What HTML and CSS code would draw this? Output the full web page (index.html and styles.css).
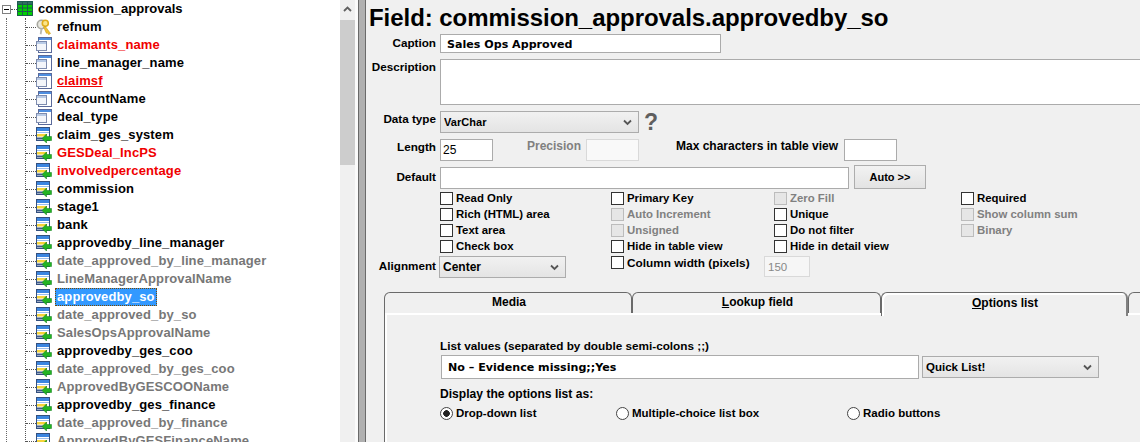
FILE: index.html
```html
<!DOCTYPE html>
<html lang="en">
<head>
<meta charset="utf-8">
<title>Field: commission_approvals.approvedby_so</title>
<link rel="stylesheet" href="styles.css">
</head>
<body>
<svg class="defs" width="0" height="0" aria-hidden="true">
  <symbol id="i-table" viewBox="0 0 16 16">
    <rect x="0" y="0" width="16" height="15" fill="#00d000"/>
    <rect x="0" y="0" width="16" height="3" fill="#2f6f5f"/>
    <path d="M.5 .5H15.5V14.5H.5ZM.5 3.5H15.5M.5 7H15.5M.5 10.5H15.5M5.5 .5V14.5M10.5 .5V14.5" fill="none" stroke="#1f5a50" stroke-width="1"/>
  </symbol>
  <symbol id="i-key" viewBox="0 0 16 16">
    <circle cx="5.5" cy="5.5" r="4.2" fill="#e8e8e0" stroke="#a8a8a0" stroke-width="1.6"/>
    <path d="M4.5 9.5L3.8 15L5.5 15.5L6.6 9.5Z" fill="#b9b9b0"/>
    <circle cx="9.3" cy="4.2" r="3" fill="#fbe58a" stroke="#e0ac1c" stroke-width="1.6"/>
    <path d="M9 7L14.5 14.5L12.6 15.6L11.4 13.8L10.4 14.3L7.6 8Z" fill="#f2c230" stroke="#c89a18" stroke-width=".6"/>
  </symbol>
  <symbol id="i-field" viewBox="0 0 16 16">
    <rect x="2.5" y=".5" width="13" height="15" fill="#fff" stroke="#5a6a9a"/>
    <rect x="3" y="1" width="12" height="2" fill="#4f8fe0"/>
    <rect x=".5" y="4.5" width="10" height="9" fill="#f4f6fa" stroke="#7e8cae"/>
    <rect x="1" y="5" width="9" height="2" fill="#b9cbe6"/>
  </symbol>
  <symbol id="i-lookup" viewBox="0 0 16 16">
    <rect x=".5" y=".5" width="13" height="13" fill="#fff" stroke="#33507f"/>
    <rect x="1" y="1" width="12" height="3" fill="#3b86e0"/>
    <rect x="1" y="5" width="12" height="1" fill="#9cc0ea"/>
    <rect x="1" y="7" width="10" height="2.5" fill="#f6d43a"/>
    <rect x="1" y="10.5" width="7" height="2" fill="#3f5a8a"/>
    <path d="M6 11.5L10.5 7V9.5H15.5V13.5H10.5V16Z" fill="#22b422" stroke="#0f7a18" stroke-width=".5"/>
  </symbol>
  <symbol id="i-chev" viewBox="0 0 9 7">
    <path d="M1 1.5L4.5 5L8 1.5" fill="none" stroke="#555" stroke-width="1.8"/>
  </symbol>
</svg>

<div class="app">
  <nav class="tree">
    <div class="node root">
      <span class="expander"></span>
      <span class="conn conn-root"></span>
      <svg class="icon"><use href="#i-table"/></svg>
      <span class="name">commission_approvals</span>
    </div>
    <div class="trunk">
      <ul class="children">
        <li class="node"><span class="conn"></span><svg class="icon"><use href="#i-key"/></svg><span class="name">refnum</span></li>
        <li class="node"><span class="conn"></span><svg class="icon"><use href="#i-field"/></svg><span class="name red">claimants_name</span></li>
        <li class="node"><span class="conn"></span><svg class="icon"><use href="#i-field"/></svg><span class="name">line_manager_name</span></li>
        <li class="node"><span class="conn"></span><svg class="icon"><use href="#i-field"/></svg><span class="name red under">claimsf</span></li>
        <li class="node"><span class="conn"></span><svg class="icon"><use href="#i-field"/></svg><span class="name">AccountName</span></li>
        <li class="node"><span class="conn"></span><svg class="icon"><use href="#i-field"/></svg><span class="name">deal_type</span></li>
        <li class="node"><span class="conn"></span><svg class="icon"><use href="#i-lookup"/></svg><span class="name">claim_ges_system</span></li>
        <li class="node"><span class="conn"></span><svg class="icon"><use href="#i-lookup"/></svg><span class="name red">GESDeal_IncPS</span></li>
        <li class="node"><span class="conn"></span><svg class="icon"><use href="#i-lookup"/></svg><span class="name red">involvedpercentage</span></li>
        <li class="node"><span class="conn"></span><svg class="icon"><use href="#i-lookup"/></svg><span class="name">commission</span></li>
        <li class="node"><span class="conn"></span><svg class="icon"><use href="#i-lookup"/></svg><span class="name">stage1</span></li>
        <li class="node"><span class="conn"></span><svg class="icon"><use href="#i-lookup"/></svg><span class="name">bank</span></li>
        <li class="node"><span class="conn"></span><svg class="icon"><use href="#i-lookup"/></svg><span class="name">approvedby_line_manager</span></li>
        <li class="node"><span class="conn"></span><svg class="icon"><use href="#i-lookup"/></svg><span class="name grey">date_approved_by_line_manager</span></li>
        <li class="node"><span class="conn"></span><svg class="icon"><use href="#i-lookup"/></svg><span class="name grey">LineManagerApprovalName</span></li>
        <li class="node"><span class="conn"></span><svg class="icon"><use href="#i-lookup"/></svg><span class="name selected">approvedby_so</span></li>
        <li class="node"><span class="conn"></span><svg class="icon"><use href="#i-lookup"/></svg><span class="name grey">date_approved_by_so</span></li>
        <li class="node"><span class="conn"></span><svg class="icon"><use href="#i-lookup"/></svg><span class="name grey">SalesOpsApprovalName</span></li>
        <li class="node"><span class="conn"></span><svg class="icon"><use href="#i-lookup"/></svg><span class="name">approvedby_ges_coo</span></li>
        <li class="node"><span class="conn"></span><svg class="icon"><use href="#i-lookup"/></svg><span class="name grey">date_approved_by_ges_coo</span></li>
        <li class="node"><span class="conn"></span><svg class="icon"><use href="#i-lookup"/></svg><span class="name grey">ApprovedByGESCOOName</span></li>
        <li class="node"><span class="conn"></span><svg class="icon"><use href="#i-lookup"/></svg><span class="name">approvedby_ges_finance</span></li>
        <li class="node"><span class="conn"></span><svg class="icon"><use href="#i-lookup"/></svg><span class="name grey">date_approved_by_finance</span></li>
        <li class="node"><span class="conn"></span><svg class="icon"><use href="#i-lookup"/></svg><span class="name grey">ApprovedByGESFinanceName</span></li>
      </ul>
    </div>
  </nav>

  <div class="scrollbar">
    <div class="sb-up"><svg class="sb-chev" viewBox="0 0 9 6"><path d="M1 5L4.5 1.5L8 5" fill="none" stroke="#606060" stroke-width="1.8"/></svg></div>
    <div class="sb-thumb"></div>
  </div>
  <div class="gutter"></div>
  <div class="splitter"></div>

  <main class="main">
    <h1 class="title">Field: commission_approvals.approvedby_so</h1>

    <div class="row row-first">
      <label class="lbl lbl-caption">Caption</label>
      <input class="input input-caption val" type="text" value="Sales Ops Approved">
    </div>
    <div class="row">
      <label class="lbl">Description</label>
      <textarea class="input input-desc"></textarea>
    </div>
    <div class="row">
      <label class="lbl">Data type</label>
      <div class="select select-type"><select><option>VarChar</option></select><svg class="chev"><use href="#i-chev"/></svg></div>
      <span class="help">?</span>
    </div>
    <div class="row">
      <label class="lbl">Length</label>
      <input class="input input-num" type="text" value="25">
      <label class="inline-lbl raised muted lbl-precision">Precision</label>
      <input class="input input-num" type="text" disabled>
      <label class="inline-lbl raised lbl-max">Max characters in table view</label>
      <input class="input input-num" type="text">
    </div>
    <div class="row">
      <label class="lbl lbl-low">Default</label>
      <input class="input input-default" type="text">
      <button class="btn-auto" type="button">Auto &gt;&gt;</button>
    </div>

    <div class="checks">
      <label class="check"><input type="checkbox"><span>Read Only</span></label>
      <label class="check"><input type="checkbox"><span>Primary Key</span></label>
      <label class="check off"><input type="checkbox" disabled><span>Zero Fill</span></label>
      <label class="check"><input type="checkbox"><span>Required</span></label>

      <label class="check"><input type="checkbox"><span>Rich (HTML) area</span></label>
      <label class="check off"><input type="checkbox" disabled><span>Auto Increment</span></label>
      <label class="check"><input type="checkbox"><span>Unique</span></label>
      <label class="check off"><input type="checkbox" disabled><span>Show column sum</span></label>

      <label class="check"><input type="checkbox"><span>Text area</span></label>
      <label class="check off"><input type="checkbox" disabled><span>Unsigned</span></label>
      <label class="check"><input type="checkbox"><span>Do not filter</span></label>
      <label class="check off"><input type="checkbox" disabled><span>Binary</span></label>

      <label class="check"><input type="checkbox"><span>Check box</span></label>
      <label class="check"><input type="checkbox"><span>Hide in table view</span></label>
      <label class="check"><input type="checkbox"><span>Hide in detail view</span></label>
    </div>

    <div class="row row-align">
      <label class="lbl lbl-low">Alignment</label>
      <div class="select select-align"><select><option>Center</option></select><svg class="chev"><use href="#i-chev"/></svg></div>
      <label class="check check-width"><input type="checkbox"><span>Column width (pixels)</span></label>
      <input class="input input-width" type="text" value="150" disabled>
    </div>

    <div class="tabs">
      <div class="tab">Media</div>
      <div class="tab tab-wide"><u>L</u>ookup field</div>
      <div class="tab active"><u>O</u>ptions list</div>
      <div class="tab"></div>
    </div>
    <section class="panel">
      <div class="panel-label panel-label-list">List values (separated by double semi-colons ;;)</div>
      <div class="list-row">
        <input class="input input-list val" type="text" value="No – Evidence missing;;Yes">
        <div class="select select-quick"><select><option>Quick List!</option></select><svg class="chev"><use href="#i-chev"/></svg></div>
      </div>
      <div class="panel-label panel-label-display">Display the options list as:</div>
      <div class="radios">
        <label class="radio radio-a"><input type="radio" name="display" checked><span>Drop-down list</span></label>
        <label class="radio radio-b"><input type="radio" name="display"><span>Multiple-choice list box</span></label>
        <label class="radio"><input type="radio" name="display"><span>Radio buttons</span></label>
      </div>
    </section>
  </main>
</div>
</body>
</html>
```
FILE: styles.css
```css
* { box-sizing: border-box; }
html, body { margin: 0; padding: 0; height: 100%; overflow: hidden; }
body { font: bold 12px "Liberation Sans", Arial, sans-serif; color: #000; background: #f0f0f0; }
.defs { display: block; height: 0; }
.app { display: flex; width: 1140px; height: 442px; overflow: hidden; }

/* tree */
.tree { width: 340px; height: 442px; flex: none; background: #fff; overflow: hidden; font-size: 13px; }
.node { display: flex; align-items: center; height: 18px; white-space: nowrap; }
.root { padding-left: 2px; }
.expander { width: 9px; height: 9px; flex: none; border: 1px solid #808080; background: linear-gradient(#000, #000) center / 5px 1px no-repeat #fff; }
.conn { flex: none; width: 10px; height: 0; border-top: 1px dotted #555; }
.conn-root { width: 6px; }
.icon { flex: none; width: 16px; height: 16px; }
.name { margin-left: 3px; padding: 0 2px; line-height: 18px; height: 18px; }
.children .name { letter-spacing: .12px; }
.red { color: #f00000; }
.under { text-decoration: underline; }
.grey { color: #777; }
.selected { background: #3399ff; color: #fff; outline: 1px dotted #7a4a00; outline-offset: -1px; }
.trunk { margin-left: 6px; border-left: 1px dotted #666; height: 430px; }
.children { list-style: none; margin: 0 0 0 18px; padding: 0; border-left: 1px dotted #555; }

/* scrollbar and splitter */
.scrollbar { width: 15px; flex: none; background: #f0f0f0; display: flex; flex-direction: column; }
.sb-up { height: 20px; display: flex; align-items: center; justify-content: center; }
.sb-chev { width: 9px; height: 6px; margin-top: -3px; }
.sb-thumb { height: 145px; background: #cdcdcd; }
.gutter { width: 3px; flex: none; background: #fbfbfb; }
.splitter { width: 8px; flex: none; background: #b0b0b0; border-left: 1px solid #6a6a6a; border-right: 1px solid #6a6a6a; }

/* main form */
.main { width: 774px; flex: none; height: 442px; overflow: hidden; background: #f0f0f0; }
.title { margin: 0; height: 34px; padding-left: 3px; font-size: 24px; line-height: 36px; font-weight: bold; white-space: nowrap; letter-spacing: -.05px; }
.row { display: flex; align-items: flex-start; margin-top: 6px; white-space: nowrap; }
.row-first { margin-top: 0; }
.lbl { flex: none; width: 70px; margin-right: 4px; text-align: right; line-height: 15px; font-size: 11.7px; }
.lbl-low { padding-top: 2px; }
.lbl-caption { padding-top: 1px; }
.raised { margin-top: -1px; }
.input { display: block; flex: none; margin: 0; padding: 0 2px; background: #fff; border: 1px solid #ababab; border-radius: 0; outline: none; font: 12px "Liberation Sans", Arial, sans-serif; color: #000; resize: none; }
.input:disabled { border-color: #d9d9d9; background: #f9f9f9; }
.val { font: bold 11.1px "DejaVu Sans", Verdana, sans-serif; padding: 1px 0 0 6px; }
.input-caption { width: 281px; height: 19px; }
.input-desc { width: 700px; height: 46px; border-right: 0; }
.input-num { width: 53px; height: 22px; }
.input-default { width: 409px; height: 22px; }
.input-width { width: 46px; height: 21px; padding-left: 3px; font-size: 11.5px; }
.input-width:disabled { background: #f6f6f6; color: #888; }
.inline-lbl { flex: none; line-height: 17px; }
.muted { color: #808080; }
.lbl-precision { width: 59px; margin-left: 34px; }
.lbl-max { width: 168px; margin-left: 37px; }
.btn-auto { flex: none; width: 72px; height: 24px; margin: -2px 0 0 5px; padding: 0; border: 1px solid #adadad; background: linear-gradient(#f2f2f2, #e3e3e3); font: bold 11px "Liberation Sans", Arial, sans-serif; color: #000; }
.help { flex: none; width: 12px; margin-left: 5px; font-size: 23px; line-height: 22px; color: #5f5f5f; font-weight: bold; }

/* selects */
.select { position: relative; flex: none; }
.select select { display: block; width: 100%; height: 100%; margin: 0; padding: 0 0 0 3px; appearance: none; -webkit-appearance: none; border: 1px solid #acacac; border-radius: 0; outline: none; background: linear-gradient(#f1f1f1, #e4e4e4); font: bold 12px "Liberation Sans", Arial, sans-serif; color: #000; }
.chev { position: absolute; right: 7px; top: 8px; width: 9px; height: 7px; pointer-events: none; }
.select-type { width: 199px; height: 22px; }
.select-type select { font-size: 11px; letter-spacing: .05px; }
.select-align { width: 127px; height: 22px; margin-left: -1px; }
.select-quick { width: 177px; height: 22px; margin: 1px 0 0 3px; }
.select-quick select { font-size: 11.5px; }

/* check boxes */
.checks { display: grid; grid-template-columns: 171px 163px 187px 1fr; grid-auto-rows: 16px; margin: 1px 0 0 74px; font-size: 11.4px; }
.check { display: flex; align-items: center; white-space: nowrap; }
.check input, .radio input { flex: none; width: 13px; height: 13px; margin: 0 3px 0 0; appearance: none; -webkit-appearance: none; background: #fff; border: 1px solid #333; border-radius: 0; }
.check input:disabled { background: #e6e6e6; border-color: #bcbcbc; }
.off { color: #808080; }
.row-align { margin-top: 2px; }
.check-width { width: 153px; height: 13px; margin: 0 0 0 45px; font-size: 11.8px; }

/* tabs */
.tabs { display: flex; margin: 14px 0 0 18px; height: 21px; white-space: nowrap; }
.tab { flex: none; width: 248px; height: 21px; padding: 0 0 0 2px; border: 1px solid #6a6a6a; border-bottom: 0; border-radius: 6px 6px 0 0; text-align: center; line-height: 19px; font-size: 12px; background: #f0f0f0; }
.tab-wide { width: 249px; }
.tab.active { position: relative; z-index: 1; width: 247px; height: 24px; box-shadow: inset 2px 2px 0 #fff; padding-top: 1px; border-right: 2px solid #808080; }
.panel { margin: -1px 0 0 18px; height: 140px; padding: 25px 0 0 55px; border-top: 1px solid #6a6a6a; border-left: 1px solid #6a6a6a; box-shadow: inset 2px 2px 0 #fff; }
.panel-label { line-height: 16px; white-space: nowrap; }
.panel-label-list { font-size: 11.75px; }
.panel-label-display { margin-top: 7px; font-size: 12.1px; }
.list-row { display: flex; margin: 1px 0 0 1px; }
.input-list { width: 478px; height: 24px; }
.radios { display: flex; margin-top: 3px; font-size: 11.5px; }
.radio { display: flex; align-items: center; height: 16px; white-space: nowrap; flex: none; }
.radio-a { width: 176px; }
.radio-b { width: 231px; }
.radio input { border-radius: 50%; border-color: #444; }
.radio input:checked { background: radial-gradient(circle, #222 0 3px, #fff 3.6px); }
```
